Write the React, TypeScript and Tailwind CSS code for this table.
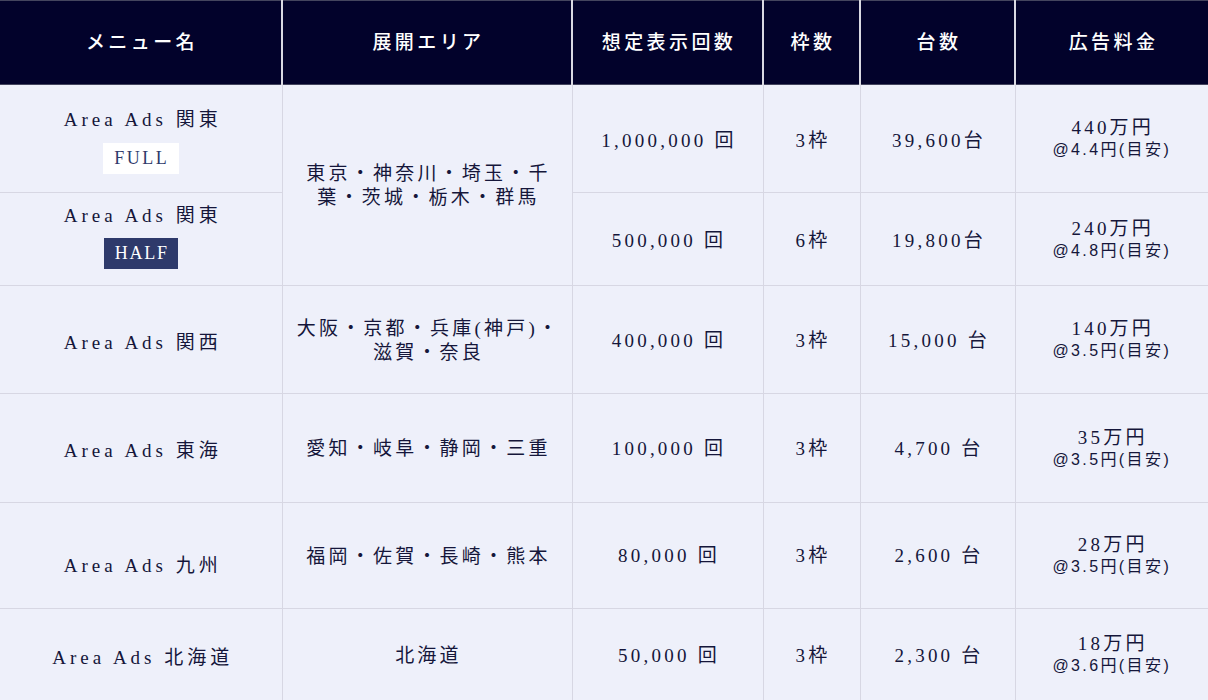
import React from "react";

const font = { fontFamily: '"Liberation Serif", "Noto Sans CJK JP", serif' };

type Row = {
  menu: string;
  badge?: "FULL" | "HALF";
  area?: string[];
  areaSpan?: number;
  views: string;
  slots: string;
  units: string;
  price: string;
  unit: string;
  h: string;
  menuPad?: string;
  cellPad: string;
};

const rows: Row[] = [
  { menu: "Area Ads 関東", badge: "FULL", area: ["東京・神奈川・埼玉・千", "葉・茨城・栃木・群馬"], areaSpan: 2, views: "1,000,000 回", slots: "3枠", units: "39,600台", price: "440万円", unit: "@4.4円(目安)", h: "h-[108px]", menuPad: "pt-[4px]", cellPad: "pt-[5px]" },
  { menu: "Area Ads 関東", badge: "HALF", views: "500,000 回", slots: "6枠", units: "19,800台", price: "240万円", unit: "@4.8円(目安)", h: "h-[93px]", menuPad: "pb-[6px]", cellPad: "pt-[4px]" },
  { menu: "Area Ads 関西", area: ["大阪・京都・兵庫(神戸)・", "滋賀・奈良"], views: "400,000 回", slots: "3枠", units: "15,000 台", price: "140万円", unit: "@3.5円(目安)", h: "h-[108px]", menuPad: "pt-[7px]", cellPad: "pt-[4px]" },
  { menu: "Area Ads 東海", area: ["愛知・岐阜・静岡・三重"], views: "100,000 回", slots: "3枠", units: "4,700 台", price: "35万円", unit: "@3.5円(目安)", h: "h-[109px]", menuPad: "pt-[5px]", cellPad: "pt-[2px]" },
  { menu: "Area Ads 九州", area: ["福岡・佐賀・長崎・熊本"], views: "80,000 回", slots: "3枠", units: "2,600 台", price: "28万円", unit: "@3.5円(目安)", h: "h-[106px]", menuPad: "pt-[21px]", cellPad: "pt-[2px]" },
  { menu: "Area Ads 北海道", area: ["北海道"], views: "50,000 回", slots: "3枠", units: "2,300 台", price: "18万円", unit: "@3.6円(目安)", h: "h-[92px]", menuPad: "pt-[7px]", cellPad: "pt-[4px]" },
];

const headers = ["メニュー名", "展開エリア", "想定表示回数", "枠数", "台数", "広告料金"];

export default function App() {
  const base = "border border-[#d7d7e3] text-center align-middle text-[19px] text-[#15163a]";
  const td = `${base} tracking-[0.17em]`;
  return (
    <div className="w-[1208px] h-[700px] overflow-hidden bg-[#eef0fa]" style={font}>
      <table className="w-[1208px] table-fixed border-collapse">
        <colgroup>
          <col className="w-[282px]" />
          <col className="w-[290px]" />
          <col className="w-[191px]" />
          <col className="w-[97px]" />
          <col className="w-[155px]" />
          <col className="w-[193px]" />
        </colgroup>
        <thead>
          <tr className="h-[84px] bg-[#02022b]">
            {headers.map((h, i) => (
              <th
                key={i}
                className={`border-x-2 border-x-[#d9d9e2] border-y border-y-[#44455e] text-white text-[19px] font-medium tracking-[0.18em] text-center align-middle pl-[3px] pt-[1px] ${i === 0 ? "border-l-0" : ""} ${i === 5 ? "border-r-0" : ""}`}
              >
                {h}
              </th>
            ))}
          </tr>
        </thead>
        <tbody>
          {rows.map((r, i) => (
            <tr key={i} className={r.h}>
              <td className={`${base} border-l-0 tracking-[0.21em] ${r.menuPad ?? ""}`}>
                <div className="leading-[24px] pl-[4px]">{r.menu}</div>
                {r.badge === "FULL" && (
                  <div className="mx-auto mt-[11px] w-[76px] h-[31px] bg-white text-[#2e3a6b] text-[18px] tracking-[0.14em] flex items-center justify-center pl-[2px]">
                    FULL
                  </div>
                )}
                {r.badge === "HALF" && (
                  <div className="mx-auto mt-[10px] w-[74px] h-[31px] bg-[#2e3a6b] text-white text-[18px] tracking-[0.1em] flex items-center justify-center pl-[2px]">
                    HALF
                  </div>
                )}
              </td>
              {r.area && (
                <td className={`${td} leading-[24px] pl-[3px] pt-[2px]`} rowSpan={r.areaSpan ?? 1}>
                  {r.area.map((a, j) => (
                    <div key={j}>{a}</div>
                  ))}
                </td>
              )}
              <td className={`${td} pl-[3px] ${r.cellPad}`}>{r.views}</td>
              <td className={`${td} pl-[3px] ${r.cellPad}`}>{r.slots}</td>
              <td className={`${td} pl-[3px] ${r.cellPad}`}>{r.units}</td>
              <td className={`${td} border-r-0 pt-[1px]`}>
                <div className="leading-[22px] pl-[2px]">{r.price}</div>
                <div
                  className="leading-[22px] text-[16px] tracking-[0.15em]"
                  style={{ fontFamily: '"Liberation Sans", "Noto Sans CJK JP", sans-serif' }}
                >
                  {r.unit}
                </div>
              </td>
            </tr>
          ))}
        </tbody>
      </table>
    </div>
  );
}
